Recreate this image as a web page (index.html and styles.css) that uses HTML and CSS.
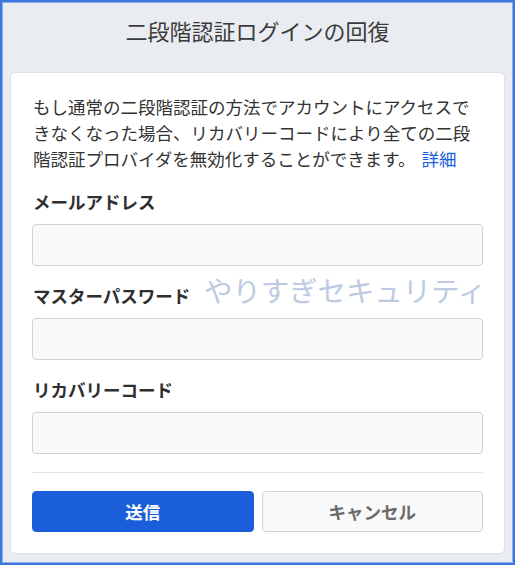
FILE: index.html
```html
<!DOCTYPE html>
<html lang="ja">
<head>
<meta charset="utf-8">
<title>二段階認証ログインの回復</title>
<link rel="stylesheet" href="styles.css">
</head>
<body>
<div class="frame">
  <h1 class="title">二段階認証ログインの回復</h1>
  <div class="card">
    <p class="intro"><span>もし通常の二段階認証の方法でアカウントにアクセスできなくなった場合、リカバリーコードにより全ての二段階認証プロバイダを無効化することができます。</span><a class="link" href="#">詳細</a></p>
    <label class="label">メールアドレス</label>
    <div class="input"></div>
    <label class="label">マスターパスワード</label>
    <div class="input"></div>
    <label class="label">リカバリーコード</label>
    <div class="input"></div>
    <hr class="divider">
    <div class="actions">
      <button class="btn btn-primary">送信</button>
      <button class="btn btn-secondary">キャンセル</button>
    </div>
    <div class="watermark">やりすぎセキュリティ</div>
  </div>
</div>
</body>
</html>
```
FILE: styles.css
```css
* { box-sizing: border-box; }
html, body { margin: 0; padding: 0; }
body {
  font-family: "Noto Sans CJK JP", "Noto Sans", sans-serif;
  background: #ffffff;
}
.frame {
  width: 515px;
  height: 565px;
  border: 2px solid #3d77dc;
  box-shadow: inset 0 0 0 1px #8fb0ec;
  background: #e9ecf1;
  display: flex;
  flex-direction: column;
}
.title {
  margin: 0;
  height: 56px;
  line-height: 56px;
  text-align: center;
  font-size: 22px;
  font-weight: 400;
  color: #3b3b3b;
}
.card {
  position: relative;
  margin: 14px 8px 0 8px;
  background: #ffffff;
  border: 1px solid #dcdfe4;
  border-radius: 5px;
  padding: 21px 21px 21px 21px;
  display: flex;
  flex-direction: column;
}
.intro {
  margin: 0 0 18px 1px;
  font-size: 17.5px;
  line-height: 26px;
  color: #333333;
}
.link {
  display: inline-block;
  margin-left: 6px;
  color: #1a5fd8;
  text-decoration: none;
}
.label {
  display: block;
  font-size: 17.5px;
  line-height: 24px;
  font-weight: 700;
  color: #2f2f2f;
  margin: 0 0 10px 1px;
}
.input {
  height: 42px;
  background: #fafafa;
  border: 1px solid #ced2d8;
  border-radius: 4px;
  margin-bottom: 18px;
}
.divider {
  margin: 0 0 18px 0;
  border: 0;
  border-top: 1px solid #e2e4e8;
  height: 0;
}
.actions {
  display: grid;
  grid-template-columns: 1fr 1fr;
  gap: 8px;
}
.btn {
  height: 41px;
  border-radius: 4px;
  font-family: "Noto Sans CJK JP", "Noto Sans", sans-serif;
  font-size: 17.5px;
  font-weight: 700;
  padding: 0;
}
.btn-primary {
  background: #1a5fd9;
  border: 1px solid #1a5fd9;
  color: #ffffff;
}
.btn-secondary {
  background: #f8f9fa;
  border: 1px solid #d0d4d9;
  color: #6b6b6b;
}
.watermark {
  position: absolute;
  left: 193px;
  top: 199px;
  font-size: 28.4px;
  line-height: 36px;
  color: #bccbe1;
  white-space: nowrap;
  pointer-events: none;
}
```
